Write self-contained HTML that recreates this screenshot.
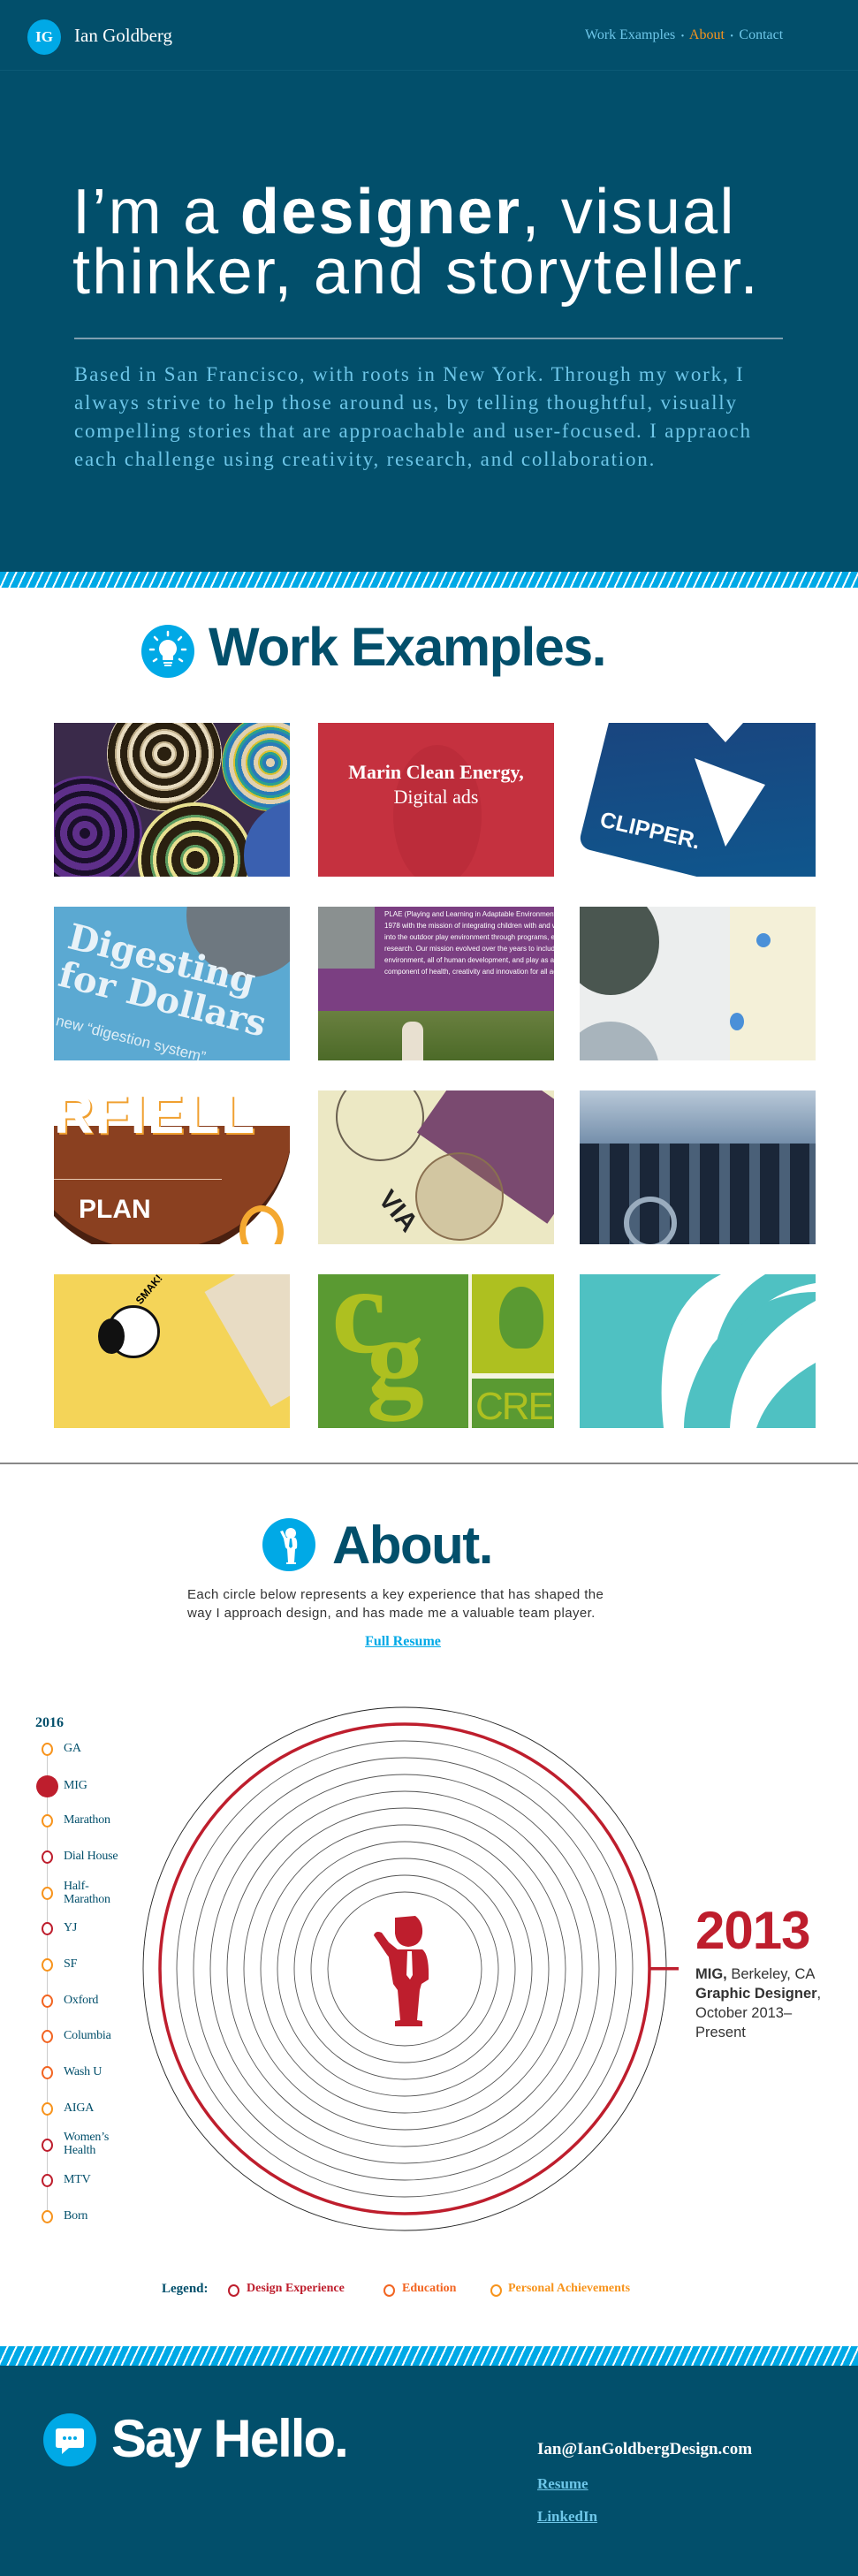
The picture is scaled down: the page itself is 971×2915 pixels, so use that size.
<!DOCTYPE html>
<html><head><meta charset="utf-8"><style>
*{margin:0;padding:0;box-sizing:border-box}
body{width:971px;height:2915px;position:relative;background:#fff;font-family:"Liberation Sans",sans-serif;overflow:hidden}
.abs{position:absolute}
.dark{background:#024f6b}
.stripe{background:repeating-linear-gradient(115deg,#00a9e6 0 7px,#fff 7px 9px);height:18px}
.tile{position:absolute;width:267px;height:174px;overflow:hidden}
.tl{position:absolute;left:72px;font-family:"Liberation Serif",serif;font-size:14px;color:#024f6b;line-height:15px;letter-spacing:-0.2px}
.dot{position:absolute;left:47px;width:13px;height:15px;border:2px solid;border-radius:50%;background:#fff}
.bb{font-weight:bold}
</style></head><body>
<!-- header -->
<div class="abs dark" style="left:0;top:0;width:971px;height:647px"></div>
<div class="abs" style="left:0;top:79px;width:971px;height:1px;background:#0c5a76"></div>
<div class="abs" style="left:31px;top:22px;width:38px;height:40px;border-radius:50%;background:#00a9e6;color:#fff;font:bold 17px 'Liberation Serif',serif;text-align:center;line-height:40px">IG</div>
<div class="abs" style="left:84px;top:28px;color:#fff;font:21px 'Liberation Serif',serif">Ian Goldberg</div>
<div class="abs" style="left:662px;top:31px;font:16px 'Liberation Serif',serif;color:#6ec6e8;white-space:nowrap">Work Examples <span style="font-size:10px">&nbsp;•&nbsp;</span> <span style="color:#f7941d">About</span> <span style="font-size:10px">&nbsp;•&nbsp;</span> Contact</div>
<div class="abs" style="left:82px;top:206px;color:#fff;font-size:72px;line-height:68px;font-weight:normal;letter-spacing:2.3px;white-space:nowrap">I’m a <span class="bb">designer</span>, visual<br>thinker, and storyteller.</div>
<div class="abs" style="left:84px;top:382px;width:802px;height:2px;background:#7f9fb0"></div>
<div class="abs" style="left:84px;top:408px;width:880px;color:#6ec6e8;font:23px/32px 'Liberation Serif',serif;letter-spacing:1.8px;white-space:nowrap">Based in San Francisco, with roots in New York. Through my work, I<br>always strive to help those around us, by telling thoughtful, visually<br>compelling stories that are approachable and user-focused. I appraoch<br>each challenge using creativity, research, and collaboration.</div>
<div class="abs stripe" style="left:0;top:647px;width:971px"></div>

<!-- work examples -->
<svg class="abs" style="left:159px;top:706px" width="62" height="62" viewBox="0 0 62 62"><circle cx="31" cy="31" r="30" fill="#00a9e6"/><path d="M31 18a10 10 0 0 0-6 18v5h12v-5a10 10 0 0 0-6-18z" fill="#fff"/><rect x="26" y="43" width="10" height="2" fill="#fff"/><rect x="27" y="46" width="8" height="2" fill="#fff"/><g stroke="#fff" stroke-width="2.5" stroke-linecap="round"><path d="M31 9v4M16 15l3 3M46 15l-3 3M11 29h4M47 29h4M15 42l3-2M47 42l-3-2"/></g></svg>
<div class="abs" style="left:236px;top:697px;color:#024f6b;font-weight:bold;font-size:61px;letter-spacing:-1.5px;white-space:nowrap">Work Examples.</div>

<div class="tile" style="left:61px;top:818px;background:#3a2a4a">
 <div class="abs" style="left:-30px;top:60px;width:130px;height:130px;border-radius:50%;background:repeating-radial-gradient(#1a0f2a 0 6px,#5e2f8a 6px 14px)"></div>
 <div class="abs" style="left:60px;top:-30px;width:130px;height:130px;border-radius:50%;background:repeating-radial-gradient(#2a2010 0 8px,#e8dcc0 8px 12px,#bfae8a 12px 14px)"></div>
 <div class="abs" style="left:190px;top:-10px;width:110px;height:110px;border-radius:50%;background:repeating-radial-gradient(#e0d0b0 0 5px,#2a7ab8 5px 9px,#2aa090 9px 12px,#d8c030 12px 14px)"></div>
 <div class="abs" style="left:95px;top:90px;width:130px;height:130px;border-radius:50%;background:repeating-radial-gradient(#2a2010 0 10px,#e8e090 10px 14px,#5a9a60 14px 17px)"></div>
 <div class="abs" style="left:215px;top:90px;width:110px;height:120px;border-radius:50%;background:#3a60b0"></div>
</div>
<div class="tile" style="left:360px;top:818px;background:#c5313f">
 <div class="abs" style="left:85px;top:25px;width:100px;height:160px;border-radius:50%;background:#bc2c3a"></div>
 <div style="position:absolute;top:42px;width:100%;text-align:center;color:#fff;font:bold 22px/28px 'Liberation Serif',serif">Marin Clean Energy,<br><span style="font-weight:normal">Digital ads</span></div>
</div>
<div class="tile" style="left:656px;top:818px;background:#fff">
 <div class="abs" style="left:20px;top:-40px;width:300px;height:220px;background:linear-gradient(160deg,#1d3f7a,#0d5a90);border-radius:14px;transform:rotate(14deg)"></div>
 <svg class="abs" style="left:90px;top:0" width="150" height="140"><path d="M55 0h40l-20 22zM40 40l80 30-45 70z" fill="#fff"/></svg>
 <div class="abs" style="left:22px;top:108px;color:#fff;font:bold 25px 'Liberation Sans',sans-serif;transform:rotate(13deg)">CLIPPER.</div>
</div>

<div class="tile" style="left:61px;top:1026px;background:#5ba9d2">
 <div class="abs" style="left:150px;top:-60px;width:140px;height:140px;border-radius:50%;background:#6e7880"></div>
 <div class="abs" style="left:8px;top:40px;color:#e8f2f8;font:bold 40px/44px 'DejaVu Serif',serif;transform:rotate(14deg);white-space:nowrap">Digesting<br>for Dollars</div>
 <div class="abs" style="left:0;top:140px;color:#e0eef6;font:17px 'Liberation Sans';transform:rotate(14deg);white-space:nowrap">new “digestion system”</div>
</div>
<div class="tile" style="left:360px;top:1026px;background:#7b3f82">
 <div class="abs" style="left:0;top:0;width:64px;height:70px;background:#8a9090"></div>
 <div class="abs" style="left:75px;top:2px;color:#fff;font:8px/13px 'Liberation Sans';white-space:nowrap">PLAE (Playing and Learning in Adaptable Environments<br>1978 with the mission of integrating children with and w<br>into the outdoor play environment through programs, e<br>research. Our mission evolved over the years to include<br>environment, all of human development, and play as an<br>component of health, creativity and innovation for all ag</div>
 <div class="abs" style="left:0;top:118px;width:267px;height:56px;background:linear-gradient(#6a8040,#4c6a28)"></div>
 <div class="abs" style="left:95px;top:130px;width:24px;height:44px;background:#e8e0d0;border-radius:10px 10px 0 0"></div>
</div>
<div class="tile" style="left:656px;top:1026px;background:#eceeee">
 <div class="abs" style="left:-20px;top:-20px;width:110px;height:120px;border-radius:50%;background:#4a5650"></div>
 <div class="abs" style="left:-20px;top:130px;width:110px;height:110px;border-radius:50%;background:#a8b4bc"></div>
 <div class="abs" style="left:170px;top:0;width:97px;height:174px;background:#f4f0d8"></div>
 <div class="abs" style="left:200px;top:30px;width:16px;height:16px;border-radius:50%;background:#4a90d8"></div>
 <div class="abs" style="left:170px;top:120px;width:16px;height:20px;border-radius:50%;background:#4a90d8"></div>
</div>

<div class="tile" style="left:61px;top:1234px;background:#fff">
 <div class="abs" style="left:-40px;top:40px;width:310px;height:150px;border-radius:0 0 160px 160px;background:#8a4020;border-bottom:10px solid #4a2010"></div>
 <div class="abs" style="left:0;top:-8px;color:#fff;font:bold 62px 'Liberation Sans';letter-spacing:2px;text-shadow:2px 2px #f0a030;white-space:nowrap">RFIELL</div>
 <div class="abs" style="left:0;top:100px;width:190px;height:1px;background:#e8c8b0"></div>
 <div class="abs" style="left:28px;top:118px;color:#fff;font:bold 30px 'Liberation Sans'">PLAN</div>
 <div class="abs" style="left:210px;top:130px;width:50px;height:60px;border:7px solid #f4a830;border-radius:50%"></div>
</div>
<div class="tile" style="left:360px;top:1234px;background:#ece8c4">
 <div class="abs" style="left:20px;top:-20px;width:100px;height:100px;border:2px solid #6a6050;border-radius:50%"></div>
 <div class="abs" style="left:130px;top:-10px;width:180px;height:120px;background:#7a4a70;transform:rotate(35deg)"></div>
 <div class="abs" style="left:110px;top:70px;width:100px;height:100px;border:2px solid #8a7050;border-radius:50%;background:rgba(150,120,80,.3)"></div>
 <div class="abs" style="left:65px;top:120px;color:#222;font:bold 30px 'Liberation Sans';transform:rotate(50deg)">VIA</div>
</div>
<div class="tile" style="left:656px;top:1234px;background:linear-gradient(#b8c8d8,#6a86a4 40%,#2a3e58)">
 <div class="abs" style="left:0;top:60px;width:267px;height:114px;background:repeating-linear-gradient(90deg,#1a2638 0 22px,#4a6078 22px 34px)"></div>
 <div class="abs" style="left:50px;top:120px;width:60px;height:60px;border:6px solid #9aacbe;border-radius:50%"></div>
</div>

<div class="tile" style="left:61px;top:1442px;background:#f4d458">
 <div class="abs" style="left:200px;top:-20px;width:120px;height:150px;background:#e8dcc4;transform:rotate(-30deg)"></div>
 <div class="abs" style="left:60px;top:35px;width:60px;height:60px;border-radius:50%;background:#fff;border:3px solid #111"></div>
 <div class="abs" style="left:50px;top:50px;width:30px;height:40px;border-radius:50%;background:#111"></div>
 <div class="abs" style="left:88px;top:10px;font:bold 12px 'Liberation Sans';transform:rotate(-50deg)">SMAK!</div>
</div>
<div class="tile" style="left:360px;top:1442px;background:#5a9a32">
 <div class="abs" style="left:170px;top:0;width:4px;height:174px;background:#f4f4e0"></div>
 <div class="abs" style="left:174px;top:0;width:93px;height:112px;background:#aec020"></div>
 <div class="abs" style="left:174px;top:112px;width:93px;height:6px;background:#f4f4e0"></div>
 <div class="abs" style="left:15px;top:-28px;color:#aec020;font:bold 140px/1 'Liberation Serif',serif">c</div>
 <div class="abs" style="left:55px;top:30px;color:#aec020;font:bold 130px/1 'Liberation Serif',serif">g</div>
 <div class="abs" style="left:205px;top:14px;width:50px;height:70px;border-radius:50% 50% 40% 40%;background:#5a9a32"></div>
 <div class="abs" style="left:178px;top:125px;color:#aec020;font:44px 'Liberation Sans';letter-spacing:-2px">CRE</div>
</div>
<div class="tile" style="left:656px;top:1442px;background:#4fc1c2">
 <svg class="abs" style="left:0;top:0" width="267" height="174"><path d="M95 174Q80 40 160 0H267V20Q200 20 150 80Q118 130 118 174Z" fill="#fff"/><path d="M170 174Q175 80 267 30V100Q215 130 200 174Z" fill="#fff"/><path d="M150 100Q200 20 267 10V0H210Q160 30 150 100Z" fill="#4fc1c2"/></svg>
</div>

<div class="abs" style="left:0;top:1655px;width:971px;height:2px;background:#888"></div>

<!-- about -->
<svg class="abs" style="left:297px;top:1718px" width="60" height="60" viewBox="0 0 60 60"><circle cx="30" cy="30" r="30" fill="#00a9e6"/><circle cx="32" cy="17" r="6" fill="#fff"/><path d="M20 15l3-1 4 8h10q3 2 2 12l-2 1-1 15h2v2h-11v-2h2l-1-15-2-2-2-10z" fill="#fff"/><path d="M31 23h2l1 9-2 2-2-2z" fill="#00a9e6"/></svg>
<div class="abs" style="left:376px;top:1714px;color:#024f6b;font-weight:bold;font-size:60px;letter-spacing:-1.5px">About.</div>
<div class="abs" style="left:212px;top:1794px;color:#333;font-size:15px;line-height:21px;letter-spacing:0.4px;white-space:nowrap">Each circle below represents a key experience that has shaped the<br>way I approach design, and has made me a valuable team player.</div>
<div class="abs" style="left:0;top:1849px;width:912px;text-align:center;font:bold 16px 'Liberation Serif',serif;color:#00a9e6;text-decoration:underline">Full Resume</div>

<!-- timeline -->
<div class="abs" style="left:40px;top:1941px;font:bold 16px 'Liberation Serif',serif;color:#024f6b">2016</div>
<div class="abs" style="left:53px;top:1980px;width:1px;height:530px;background:#ccc"></div>
<div class="dot" style="top:1972px;border-color:#f7941d"></div><div class="tl" style="top:1971px">GA</div>
<div class="abs" style="left:41px;top:2009px;width:25px;height:25px;border-radius:50%;background:#be1e2d"></div><div class="tl" style="top:2013px">MIG</div>
<div class="dot" style="top:2053px;border-color:#f7941d"></div><div class="tl" style="top:2052px">Marathon</div>
<div class="dot" style="top:2094px;border-color:#be1e2d"></div><div class="tl" style="top:2093px">Dial House</div>
<div class="dot" style="top:2135px;border-color:#f7941d"></div><div class="tl" style="top:2127px">Half-<br>Marathon</div>
<div class="dot" style="top:2175px;border-color:#be1e2d"></div><div class="tl" style="top:2174px">YJ</div>
<div class="dot" style="top:2216px;border-color:#f7941d"></div><div class="tl" style="top:2215px">SF</div>
<div class="dot" style="top:2257px;border-color:#f26522"></div><div class="tl" style="top:2256px">Oxford</div>
<div class="dot" style="top:2297px;border-color:#f26522"></div><div class="tl" style="top:2296px">Columbia</div>
<div class="dot" style="top:2338px;border-color:#f26522"></div><div class="tl" style="top:2337px">Wash U</div>
<div class="dot" style="top:2379px;border-color:#f7941d"></div><div class="tl" style="top:2378px">AIGA</div>
<div class="dot" style="top:2420px;border-color:#be1e2d"></div><div class="tl" style="top:2411px">Women’s<br>Health</div>
<div class="dot" style="top:2460px;border-color:#be1e2d"></div><div class="tl" style="top:2459px">MTV</div>
<div class="dot" style="top:2501px;border-color:#f7941d"></div><div class="tl" style="top:2500px">Born</div>

<!-- rings -->
<svg class="abs" style="left:0;top:1900px" width="971" height="650">
<g fill="none" stroke="#555" stroke-width="0.9">
<circle cx="458" cy="328" r="296" stroke="#222"/>
<circle cx="458" cy="328" r="258"/><circle cx="458" cy="328" r="239"/><circle cx="458" cy="328" r="220"/><circle cx="458" cy="328" r="201"/><circle cx="458" cy="328" r="182"/><circle cx="458" cy="328" r="163"/><circle cx="458" cy="328" r="144"/><circle cx="458" cy="328" r="125"/><circle cx="458" cy="328" r="106"/><circle cx="458" cy="328" r="87"/>
</g>
<circle cx="458" cy="328" r="277" fill="none" stroke="#be1e2d" stroke-width="3.5"/>
<rect x="735" y="326" width="33" height="3.5" fill="#be1e2d"/>
</svg>
<svg class="abs" style="left:380px;top:2140px" width="160" height="180"><g fill="#be1e2d"><path d="M67 30L90 28Q99 35 98 48Q96 62 82 63Q69 62 67 48Z"/><path d="M43 50Q45 44 52 47L60 58L70 66L66 82L58 72Z"/><path d="M64 66L98 66Q106 72 105 100L97 105L95 112L92 146L98 147L98 153L67 153L67 147L73 146L70 112L65 105L60 75Z"/></g><path d="M81 68L86 68L87 95L84 100L80 95Z" fill="#fff"/></svg>
<div class="abs" style="left:787px;top:2150px;color:#be1e2d;font:bold 60px 'Liberation Sans';letter-spacing:-1px">2013</div>
<div class="abs" style="left:787px;top:2223px;color:#333;font-size:16.5px;line-height:22px;white-space:nowrap"><span class="bb">MIG,</span> Berkeley, CA<br><span class="bb">Graphic Designer</span>,<br>October 2013–<br>Present</div>

<!-- legend -->
<div class="abs" style="left:183px;top:2582px;font:bold 15px 'Liberation Serif',serif;color:#024f6b;white-space:nowrap">Legend:</div>
<div class="abs" style="left:258px;top:2585px;width:13px;height:14px;border:2px solid #be1e2d;border-radius:50%"></div>
<div class="abs" style="left:279px;top:2582px;font:bold 14px 'Liberation Serif',serif;color:#be1e2d;white-space:nowrap">Design Experience</div>
<div class="abs" style="left:434px;top:2585px;width:13px;height:14px;border:2px solid #f26522;border-radius:50%"></div>
<div class="abs" style="left:455px;top:2582px;font:bold 14px 'Liberation Serif',serif;color:#f26522">Education</div>
<div class="abs" style="left:555px;top:2585px;width:13px;height:14px;border:2px solid #f7941d;border-radius:50%"></div>
<div class="abs" style="left:575px;top:2582px;font:bold 14px 'Liberation Serif',serif;color:#f7941d;white-space:nowrap">Personal Achievements</div>

<!-- footer -->
<div class="abs stripe" style="left:0;top:2655px;width:971px;height:22px"></div>
<div class="abs dark" style="left:0;top:2677px;width:971px;height:238px"></div>
<svg class="abs" style="left:49px;top:2731px" width="60" height="60" viewBox="0 0 60 60"><circle cx="30" cy="30" r="30" fill="#00a9e6"/><path d="M17 17h26q3 0 3 3v16q0 3-3 3H29l-8 7v-7h-4q-3 0-3-3V20q0-3 3-3z" fill="#fff"/><circle cx="24" cy="28" r="2" fill="#00a9e6"/><circle cx="30" cy="28" r="2" fill="#00a9e6"/><circle cx="36" cy="28" r="2" fill="#00a9e6"/></svg>
<div class="abs" style="left:126px;top:2725px;color:#fff;font-weight:bold;font-size:60px;letter-spacing:-2px;white-space:nowrap">Say Hello.</div>
<div class="abs" style="left:608px;top:2761px;color:#fff;font:bold 19px 'Liberation Serif',serif;white-space:nowrap">Ian@IanGoldbergDesign.com</div>
<div class="abs" style="left:608px;top:2801px;color:#6ec6e8;font:bold 17px 'Liberation Serif',serif;text-decoration:underline">Resume</div>
<div class="abs" style="left:608px;top:2838px;color:#6ec6e8;font:bold 17px 'Liberation Serif',serif;text-decoration:underline">LinkedIn</div>
</body></html>
